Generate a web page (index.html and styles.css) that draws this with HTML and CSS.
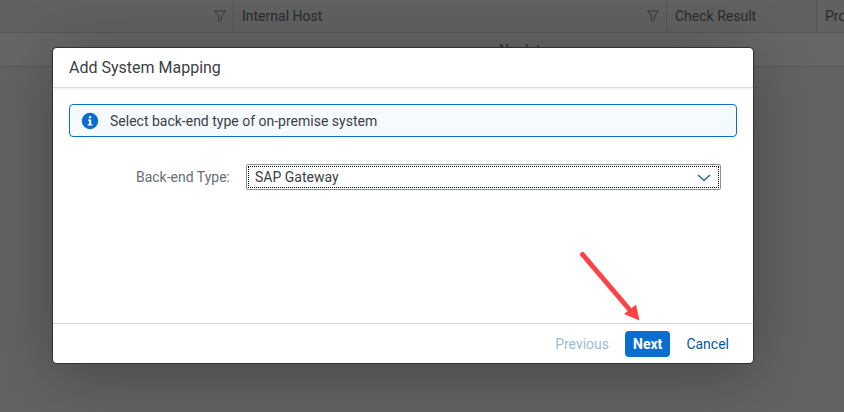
FILE: index.html
```html
<!DOCTYPE html>
<html lang="en">
<head>
<meta charset="utf-8">
<title>Add System Mapping</title>
<link rel="stylesheet" href="styles.css">
</head>
<body>
<main class="page">
  <table class="systems">
    <colgroup><col class="col-virtual"><col class="col-host"><col class="col-result"><col></colgroup>
    <thead>
      <tr>
        <th scope="col"><div class="head"><span></span><svg class="filter" viewBox="0 0 12 12" aria-hidden="true"><path d="M.7 1h10.600L7.600 6v3.600L4.800 11.300V6z"/></svg></div></th>
        <th scope="col"><div class="head"><span>Internal Host</span><svg class="filter" viewBox="0 0 12 12" aria-hidden="true"><path d="M.7 1h10.600L7.600 6v3.600L4.800 11.300V6z"/></svg></div></th>
        <th scope="col">Check Result</th>
        <th scope="col">Pro</th>
      </tr>
    </thead>
    <tbody><tr><td class="empty" colspan="4">No data</td></tr></tbody>
  </table>
</main>
<div class="overlay">
  <section class="dialog" role="dialog" aria-modal="true" aria-labelledby="title">
    <header class="dialog-head"><h1 id="title">Add System Mapping</h1></header>
    <div class="dialog-body">
      <div class="notice">
        <svg class="info" viewBox="0 0 16 16" aria-hidden="true"><circle cx="8" cy="8" r="8.200"/><path d="M6 6.500h3.200v4.700h1.300v1.200H5.800v-1.200h1.300V7.700H6zM6.900 3.300h2.300v2H6.900z"/></svg>
        <span>Select back-end type of on-premise system</span>
      </div>
      <div class="field">
        <label for="type">Back-end Type:</label>
        <div class="select">
          <select id="type"><option>SAP Gateway</option></select>
          <svg class="chevron" viewBox="0 0 14 8" aria-hidden="true"><path d="M1 1l6 5.500L13 1"/></svg>
        </div>
      </div>
    </div>
    <footer class="dialog-foot">
      <button class="btn" type="button" disabled>Previous</button>
      <button class="btn primary" type="button">Next</button>
      <button class="btn" type="button">Cancel</button>
    </footer>
    <svg class="arrow" viewBox="0 0 62 72" aria-hidden="true"><path class="shaft" d="M3.500 5.500L50 60"/><path class="tip" d="M60.500 71.500L45 65L57 55.500z"/></svg>
  </section>
</div>
</body>
</html>
```
FILE: styles.css
```css
* { box-sizing: border-box; }
body {
  margin: 0;
  min-height: 100vh;
  overflow: hidden;
  background: #636363;
  color: #2a2c2e;
  font: 14px/20px Roboto, sans-serif;
}
.systems { width: 100%; table-layout: fixed; border-collapse: separate; border-spacing: 0; }
.col-virtual { width: 234px; }
.col-host { width: 433px; }
.col-result { width: 150px; }
.systems th {
  height: 33px;
  padding: 0 7px 0 8px;
  background: #616161;
  border-right: 1px solid #575757;
  border-bottom: 1px solid #575757;
  font-weight: 400;
  text-align: left;
  white-space: nowrap;
}
.systems th:last-child { padding-right: 0; border-right: 0; }
.head { display: flex; align-items: center; justify-content: space-between; }
.filter { width: 12px; height: 12px; fill: none; stroke: #393939; stroke-width: 1; }
.empty {
  height: 34px;
  padding: 0 0 0 499px;
  background: #666;
  border-bottom: 1px solid #575757;
}
.overlay { position: absolute; inset: 0; padding: 48px 91px 0 53px; }
.dialog {
  position: relative;
  background: #fff;
  color: #3c4044;
  border-radius: 4px;
  box-shadow: 0 0 0 1px #333, 0 10px 64px rgba(0, 0, 0, .3);
}
.dialog-head {
  display: flex;
  align-items: center;
  height: 40px;
  padding: 0 16px;
  border-bottom: 1px solid #d9d9d9;
  box-shadow: 0 1px 3px rgba(0, 0, 0, .08);
}
h1 { margin: 0; font-size: 16px; font-weight: 400; }
.dialog-body { min-height: 235px; padding: 16px; }
.notice {
  display: flex;
  align-items: center;
  gap: 12px;
  height: 33px;
  padding: 0 12px;
  background: #f5faff;
  border: 1px solid #0a6ed1;
  border-radius: 4px;
}
.info { width: 16px; height: 16px; overflow: visible; fill: #0a6ed1; }
.info path { fill: #fff; }
.field { display: flex; align-items: center; gap: 16px; margin: 27px 16px 0 0; }
.field label { flex: 0 0 161px; color: #6a6d70; text-align: right; }
.select { position: relative; flex: 1; }
.select select {
  display: block;
  width: 100%;
  height: 26px;
  padding: 0 30px 0 8px;
  appearance: none;
  background: #fff;
  border: 1px solid #89919a;
  border-radius: 2px;
  outline: 1px dotted #000;
  outline-offset: -3px;
  color: #3c4044;
  font: inherit;
}
.chevron { position: absolute; top: 10px; right: 10px; width: 14px; height: 8px; fill: none; stroke: #2a69ab; stroke-width: 1.5; }
.dialog-foot {
  display: flex;
  align-items: center;
  justify-content: flex-end;
  gap: 8px;
  height: 40px;
  padding: 0 16px;
  border-top: 1px solid #d9d9d9;
}
.btn {
  height: 26px;
  padding: 0 8px;
  background: none;
  border: 0;
  border-radius: 4px;
  color: #0854a0;
  font: inherit;
}
.btn:disabled { color: #9cbbd9; }
.primary { background: #0a6ed1; color: #fff; font-weight: 700; }
.arrow { position: absolute; right: 112px; bottom: 42px; width: 62px; height: 72px; }
.shaft { fill: none; stroke: #fc4347; stroke-width: 5; stroke-linecap: round; }
.tip { fill: #fc4347; }
```
